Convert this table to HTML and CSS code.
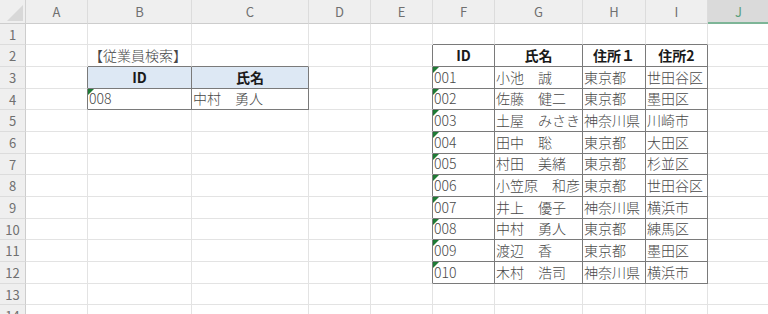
FILE: index.html
```html
<!DOCTYPE html>
<html lang="ja">
<head>
<meta charset="utf-8">
<title>従業員検索</title>
<link rel="stylesheet" href="styles.css">
</head>
<body>
<div class="sheet">
  <div class="corner"><div class="tri"></div></div>
  <div class="ch">A</div><div class="ch">B</div><div class="ch">C</div><div class="ch">D</div><div class="ch">E</div><div class="ch">F</div><div class="ch">G</div><div class="ch">H</div><div class="ch">I</div><div class="ch sel">J</div>

  <div class="rh">1</div>
  <div class="c"></div><div class="c"></div><div class="c"></div><div class="c"></div><div class="c"></div><div class="c tb"></div><div class="c tb"></div><div class="c tb"></div><div class="c tb"></div><div class="c"></div>

  <div class="rh">2</div>
  <div class="c"></div><div class="c tb">【従業員検索】</div><div class="c tb"></div><div class="c"></div><div class="c tr"></div><div class="c tr tb hd">ID</div><div class="c tr tb hd">氏名</div><div class="c tr tb hd">住所１</div><div class="c tr tb hd">住所2</div><div class="c"></div>

  <div class="rh">3</div>
  <div class="c tr"></div><div class="c tr tb hd blue">ID</div><div class="c tr tb hd blue">氏名</div><div class="c"></div><div class="c tr"></div><div class="c tr tb flag">001</div><div class="c tr tb">小池　誠</div><div class="c tr tb">東京都</div><div class="c tr tb">世田谷区</div><div class="c"></div>

  <div class="rh">4</div>
  <div class="c tr"></div><div class="c tr tb flag">008</div><div class="c tr tb">中村　勇人</div><div class="c"></div><div class="c tr"></div><div class="c tr tb flag">002</div><div class="c tr tb">佐藤　健二</div><div class="c tr tb">東京都</div><div class="c tr tb">墨田区</div><div class="c"></div>

  <div class="rh">5</div>
  <div class="c"></div><div class="c"></div><div class="c"></div><div class="c"></div><div class="c tr"></div><div class="c tr tb flag">003</div><div class="c tr tb">土屋　みさき</div><div class="c tr tb">神奈川県</div><div class="c tr tb">川崎市</div><div class="c"></div>

  <div class="rh">6</div>
  <div class="c"></div><div class="c"></div><div class="c"></div><div class="c"></div><div class="c tr"></div><div class="c tr tb flag">004</div><div class="c tr tb">田中　聡</div><div class="c tr tb">東京都</div><div class="c tr tb">大田区</div><div class="c"></div>

  <div class="rh">7</div>
  <div class="c"></div><div class="c"></div><div class="c"></div><div class="c"></div><div class="c tr"></div><div class="c tr tb flag">005</div><div class="c tr tb">村田　美緒</div><div class="c tr tb">東京都</div><div class="c tr tb">杉並区</div><div class="c"></div>

  <div class="rh">8</div>
  <div class="c"></div><div class="c"></div><div class="c"></div><div class="c"></div><div class="c tr"></div><div class="c tr tb flag">006</div><div class="c tr tb">小笠原　和彦</div><div class="c tr tb">東京都</div><div class="c tr tb">世田谷区</div><div class="c"></div>

  <div class="rh">9</div>
  <div class="c"></div><div class="c"></div><div class="c"></div><div class="c"></div><div class="c tr"></div><div class="c tr tb flag">007</div><div class="c tr tb">井上　優子</div><div class="c tr tb">神奈川県</div><div class="c tr tb">横浜市</div><div class="c"></div>

  <div class="rh">10</div>
  <div class="c"></div><div class="c"></div><div class="c"></div><div class="c"></div><div class="c tr"></div><div class="c tr tb flag">008</div><div class="c tr tb">中村　勇人</div><div class="c tr tb">東京都</div><div class="c tr tb">練馬区</div><div class="c"></div>

  <div class="rh">11</div>
  <div class="c"></div><div class="c"></div><div class="c"></div><div class="c"></div><div class="c tr"></div><div class="c tr tb flag">009</div><div class="c tr tb">渡辺　香</div><div class="c tr tb">東京都</div><div class="c tr tb">墨田区</div><div class="c"></div>

  <div class="rh">12</div>
  <div class="c"></div><div class="c"></div><div class="c"></div><div class="c"></div><div class="c tr"></div><div class="c tr tb flag">010</div><div class="c tr tb">木村　浩司</div><div class="c tr tb">神奈川県</div><div class="c tr tb">横浜市</div><div class="c"></div>

  <div class="rh">13</div>
  <div class="c"></div><div class="c"></div><div class="c"></div><div class="c"></div><div class="c"></div><div class="c"></div><div class="c"></div><div class="c"></div><div class="c"></div><div class="c"></div>

  <div class="rh">14</div>
  <div class="c"></div><div class="c"></div><div class="c"></div><div class="c"></div><div class="c"></div><div class="c"></div><div class="c"></div><div class="c"></div><div class="c"></div><div class="c"></div>
</div>
</body>
</html>
```

FILE: styles.css
```css
* { box-sizing: border-box; }

html, body {
  margin: 0;
  padding: 0;
}

body {
  width: 768px;
  height: 314px;
  overflow: hidden;
  background: #ffffff;
  font-family: "Noto Sans CJK JP", "Noto Sans", sans-serif;
}

.sheet {
  display: grid;
  grid-template-columns: 26px 62px 104px 117px 62px 62px 62px 88px 63px 62px 62px;
  grid-template-rows: 24px repeat(4, 21px 22px 22px) 21px 22px;
  width: 790px;
}

.corner {
  background: #efefef;
  border-right: 1px solid #d2d2d2;
  border-bottom: 1px solid #cdcdcd;
  display: flex;
  align-items: flex-end;
  justify-content: flex-end;
  padding: 0 2px 2px 0;
}

.corner .tri {
  width: 16px;
  height: 16px;
  background: #d8d8d8;
  clip-path: polygon(100% 0, 100% 100%, 0 100%);
}

.ch {
  background: #efefef;
  border-right: 1px solid #dcdcdc;
  border-bottom: 1px solid #cdcdcd;
  display: flex;
  align-items: center;
  justify-content: center;
  font-size: 13px;
  color: #707070;
}

.ch.sel {
  background: #dadada;
  color: #5aa07e;
  border-bottom: 2px solid #7db597;
}

.rh {
  background: #efefef;
  border-right: 1px solid #cdcdcd;
  border-bottom: 1px solid #dcdcdc;
  display: flex;
  align-items: center;
  justify-content: center;
  font-size: 13px;
  color: #707070;
}

.c {
  position: relative;
  border-right: 1px solid #e3e3e3;
  border-bottom: 1px solid #e3e3e3;
  display: flex;
  align-items: flex-end;
  padding: 0 1px 1px 1px;
  font-size: 14px;
  font-weight: 300;
  line-height: 20px;
  color: #484848;
  white-space: nowrap;
}

.tr { border-right-color: #7a7a7a; }
.tb { border-bottom-color: #7a7a7a; }

.hd {
  justify-content: center;
  font-weight: 700;
  color: #1a1a1a;
}

.blue { background: #dde8f4; }

.flag::before {
  content: "";
  position: absolute;
  top: 0;
  left: 0;
  width: 0;
  height: 0;
  border-top: 6px solid #1f7a35;
  border-right: 6px solid transparent;
}
```
